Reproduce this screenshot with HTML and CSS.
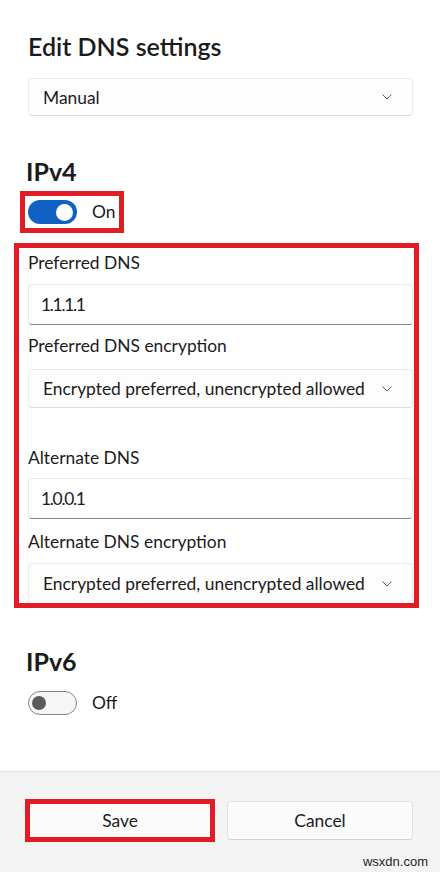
FILE: index.html
```html
<!DOCTYPE html>
<html lang="en">
<head>
<meta charset="utf-8">
<title>Edit DNS settings</title>
<link rel="stylesheet" href="styles.css">
</head>
<body>
<div class="dialog">
  <div class="content">
    <h1 class="title">Edit DNS settings</h1>
    <div class="select select-top">
      <span>Manual</span>
      <svg class="chev" width="10" height="6" viewBox="0 0 10 6"><polyline points="0.5,0.5 5,5 9.5,0.5" fill="none" stroke="#5c5c5c" stroke-width="1"/></svg>
    </div>

    <h2 class="section">IPv4</h2>
    <div class="mark mark-toggle">
      <span class="toggle on"><span class="knob"></span></span>
      <span class="toggle-text">On</span>
    </div>

    <div class="mark mark-fields">
      <div class="label label-first">Preferred DNS</div>
      <div class="input">1.1.1.1</div>
      <div class="label label-enc">Preferred DNS encryption</div>
      <div class="select select-enc">
        <span>Encrypted preferred, unencrypted allowed</span>
        <svg class="chev" width="10" height="6" viewBox="0 0 10 6"><polyline points="0.5,0.5 5,5 9.5,0.5" fill="none" stroke="#5c5c5c" stroke-width="1"/></svg>
      </div>
      <div class="label label-alt">Alternate DNS</div>
      <div class="input input-alt">1.0.0.1</div>
      <div class="label label-enc2">Alternate DNS encryption</div>
      <div class="select select-enc2">
        <span>Encrypted preferred, unencrypted allowed</span>
        <svg class="chev" width="10" height="6" viewBox="0 0 10 6"><polyline points="0.5,0.5 5,5 9.5,0.5" fill="none" stroke="#5c5c5c" stroke-width="1"/></svg>
      </div>
    </div>

    <h2 class="section section-v6">IPv6</h2>
    <div class="toggle-row">
      <span class="toggle off"><span class="knob"></span></span>
      <span class="toggle-text">Off</span>
    </div>
  </div>

  <div class="footer">
    <div class="buttons">
      <div class="mark mark-save">Save</div>
      <div class="btn">Cancel</div>
    </div>
    <span class="watermark">wsxdn.com</span>
  </div>
</div>
</body>
</html>
```

FILE: styles.css
```css
* { box-sizing: border-box; }
html, body { margin: 0; padding: 0; background: #ffffff; }
body {
  font-family: Lato, "Open Sans", "Noto Sans", sans-serif;
  color: #1b1b1b;
  font-size: 17.4px;
}
.dialog {
  width: 440px;
  height: 872px;
  display: flex;
  flex-direction: column;
  background: #ffffff;
}
.content {
  flex: 1;
  padding: 30px 27px 0 28px;
  display: flex;
  flex-direction: column;
  align-items: stretch;
}
.title {
  margin: 0;
  font-size: 25px;
  line-height: 32px;
  font-weight: 600;
  height: 32px;
}
.select {
  height: 38px;
  border: 1px solid #ebebeb;
  border-bottom-color: #dcdcdc;
  border-radius: 4px;
  background: #fdfdfd;
  display: flex;
  align-items: center;
  justify-content: space-between;
  padding: 0 20px 0 14px;
  font-size: 17.4px;
}
.select-top { margin-top: 16px; }
.chev { display: block; }
.section {
  margin: 39px 0 0 -2px;
  font-size: 25px;
  line-height: 32px;
  height: 32px;
  font-weight: 700;
}
.mark { border: 5px solid #e21c24; }
.mark-toggle {
  margin: 4px 0 0 -8px;
  width: 104px;
  height: 42px;
  display: flex;
  align-items: center;
  padding-left: 3px;
}
.toggle {
  width: 49px;
  height: 24px;
  border-radius: 12px;
  display: flex;
  align-items: center;
  flex: none;
}
.toggle.on { background: #1061c4; justify-content: flex-end; padding-right: 4px; }
.toggle.on .knob { width: 17px; height: 17px; border-radius: 50%; background: #ffffff; }
.toggle.off { background: #f6f6f6; border: 1px solid #858585; padding-left: 3px; }
.toggle.off .knob { width: 14px; height: 14px; border-radius: 50%; background: #5b5b5b; }
.toggle-text { margin-left: 15px; font-size: 17.4px; line-height: 24px; }
.mark-fields {
  margin: 10px -6px 0 -14px;
  padding: 3px 1px 0 9px;
  display: flex;
  flex-direction: column;
}
.label { font-size: 17.4px; line-height: 24px; height: 24px; }
.label-enc { margin-top: 9px; }
.label-alt { margin-top: 38px; }
.label-enc2 { margin-top: 11px; }
.input {
  height: 41px;
  margin-top: 9px;
  background: #ffffff;
  border: 1px solid #e8e8e8;
  border-bottom: 1px solid #868686;
  border-radius: 4px;
  display: flex;
  align-items: center;
  padding-left: 12px;
  font-size: 17.4px;
  letter-spacing: -1.3px;
}
.input-alt { margin-top: 8px; }
.select-enc { margin-top: 11px; height: 39px; }
.select-enc2 { margin-top: 9px; height: 40px; border-bottom: none; border-radius: 4px 4px 0 0; }
.section-v6 { margin-top: 37px; }
.toggle-row {
  margin-top: 14px;
  display: flex;
  align-items: center;
  height: 24px;
}
.footer {
  height: 101px;
  flex: none;
  background: #f3f3f3;
  border-top: 1px solid #e3e3e3;
  position: relative;
  padding: 27px 27px 0 25px;
}
.buttons {
  display: flex;
  align-items: center;
  gap: 12px;
  height: 43px;
}
.mark-save {
  width: 190px;
  height: 43px;
  background: #fbfbfb;
  display: flex;
  align-items: center;
  justify-content: center;
  font-size: 17.4px;
}
.btn {
  width: 186px;
  height: 39px;
  background: #fbfbfb;
  border: 1px solid #e3e3e3;
  border-bottom-color: #d2d2d2;
  border-radius: 4px;
  display: flex;
  align-items: center;
  justify-content: center;
  font-size: 17.4px;
}
.watermark {
  position: absolute;
  right: 12px;
  bottom: 3px;
  font-family: "Liberation Sans", Arial, sans-serif;
  font-size: 13px;
  color: #1e1e1e;
}
```
